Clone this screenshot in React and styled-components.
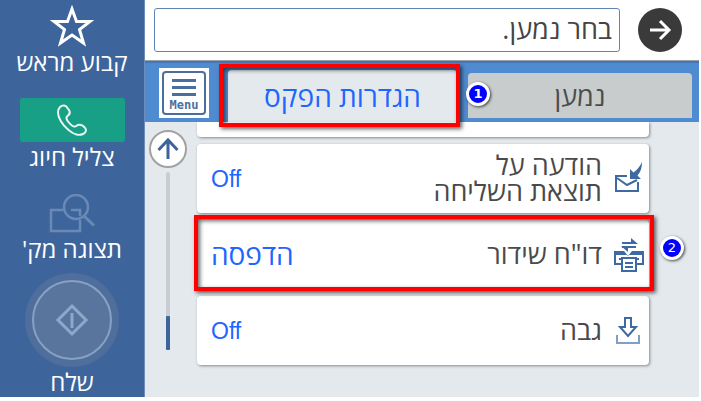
import { useState } from "react";
import styled, { createGlobalStyle } from "styled-components";

const GlobalStyle = createGlobalStyle`
  * {
    box-sizing: border-box;
  }
  body {
    margin: 0;
    background: #ffffff;
    font-family: "Open Sans", "Liberation Sans", sans-serif;
  }
  button {
    border: none;
    padding: 0;
    background: none;
    font-family: inherit;
    cursor: pointer;
  }
`;

const Screen = styled.div`
  display: flex;
  margin-right: 2px;
  background: #e4e9ee;
`;

const Sidebar = styled.nav`
  width: 145px;
  flex-shrink: 0;
  display: flex;
  flex-direction: column;
  background: #3d659c;
  border-right: 1px solid #6e8db8;
`;

const SideButton = styled.button`
  display: flex;
  flex-direction: column;
  align-items: center;
  padding-top: ${(props) => props.$space}px;
  color: #ffffff;
`;

const SideLabel = styled.span`
  font-size: 24px;
  line-height: 30px;
`;

const GreenBox = styled.span`
  width: 105px;
  height: 44px;
  display: flex;
  align-items: center;
  justify-content: center;
  border-radius: 3px;
  background: #17a085;
`;

const SendCircle = styled.span`
  width: 94px;
  height: 94px;
  display: flex;
  align-items: center;
  justify-content: center;
  border-radius: 50%;
  background: #4f6e9b;
`;

const SendRing = styled.span`
  width: 80px;
  height: 80px;
  display: flex;
  align-items: center;
  justify-content: center;
  border: 2px solid #87a1c4;
  border-radius: 50%;
  background: #5a759d;
`;

const Main = styled.main`
  flex: 1;
  min-width: 0;
  display: flex;
  flex-direction: column;
`;

const Header = styled.header`
  display: flex;
  align-items: center;
  gap: 18px;
  padding: 8px 17px 8px 9px;
  background: #ffffff;
  border-bottom: 1px solid #999fa6;
`;

const Recipient = styled.input`
  flex: 1;
  min-width: 0;
  height: 44px;
  padding: 0 7px 3px;
  border: 1px solid #6084b0;
  border-radius: 3px;
  outline: none;
  background: #ffffff;
  color: #444444;
  font-family: inherit;
  font-size: 27px;

  &::placeholder {
    color: #444444;
    opacity: 1;
  }
`;

const NextButton = styled.button`
  width: 44px;
  height: 44px;
  display: flex;
  align-items: center;
  justify-content: center;
  border-radius: 50%;
  background: #3a3a3a;
`;

const TabBar = styled.div`
  height: 61px;
  display: flex;
  align-items: center;
  padding: 0 7px 0 14px;
  background: #4f8bd0;
  border-top: 2px solid #4278b8;
`;

const MenuButton = styled.button`
  width: 50px;
  height: 50px;
  display: flex;
  margin-right: 19px;
  padding: 3px;
  background: #ffffff;
`;

const MenuFace = styled.span`
  flex: 1;
  height: 44px;
  display: flex;
  flex-direction: column;
  align-items: center;
  padding-top: 5px;
  border: 2px solid #4a6f9f;
  border-radius: 4px;
  color: #4a6f9f;
`;

const MenuText = styled.span`
  font-family: "DejaVu Sans Mono", monospace;
  font-size: 12px;
  font-weight: 700;
  line-height: 14px;
`;

const Tabs = styled.div`
  flex: 1;
  height: 100%;
  display: flex;
  align-items: flex-end;
  gap: 11px;
`;

const Tab = styled.button`
  position: relative;
  flex: ${(props) => (props.$active ? 46 : 45)} 1 0;
  height: ${(props) => (props.$active ? 52 : 45)}px;
  margin-bottom: ${(props) => (props.$active ? 0 : 4)}px;
  border-radius: 4px 4px 0 0;
  background: ${(props) => (props.$active ? "#e4e9ee" : "#c8cccd")};
  color: ${(props) => (props.$active ? "#1f66ff" : "#4c4c4c")};
  font-size: ${(props) => (props.$active ? 28 : 27)}px;
  line-height: 36px;
`;

const Content = styled.div`
  display: flex;
  padding: 0 50px 32px 4px;
`;

const ScrollColumn = styled.div`
  width: 38px;
  display: flex;
  flex-direction: column;
  align-items: center;
  margin-right: 10px;
  padding: 8px 0 15px;
`;

const UpButton = styled.button`
  width: 38px;
  height: 38px;
  display: flex;
  align-items: center;
  justify-content: center;
  border: 2px solid #a2a2a2;
  border-radius: 50%;
  background: #ffffff;
`;

const Track = styled.div`
  flex: 1;
  width: 4px;
  display: flex;
  align-items: flex-end;
  margin-top: 4px;
  border-radius: 2px;
  background: #c9cdd2;
`;

const Thumb = styled.div`
  width: 4px;
  height: 34px;
  border-radius: 1px;
  background: #3d659c;
`;

const List = styled.div`
  flex: 1;
  display: flex;
  flex-direction: column;
  gap: 7px;
`;

const Row = styled.button`
  position: relative;
  height: 69px;
  display: flex;
  align-items: center;
  justify-content: space-between;
  padding: 0 5px 0 14px;
  border-radius: 4px;
  background: #ffffff;
  box-shadow: 1px 1px 3px #85898f;
`;

const RowEnd = styled.div`
  height: 15px;
  border-radius: 0 0 4px 4px;
  background: #ffffff;
  box-shadow: 1px 1px 3px #85898f;
`;

const Value = styled.span`
  color: #1f66ff;
  font-family: ${(props) => (props.$latin ? '"Liberation Sans", sans-serif' : "inherit")};
  font-size: ${(props) => (props.$latin ? 23 : 28)}px;
  line-height: 26px;
  padding-bottom: ${(props) => (props.$latin ? 0 : 2)}px;
`;

const Info = styled.span`
  display: flex;
  align-items: center;
  gap: 12px;
`;

const Label = styled.span`
  padding-bottom: 2px;
  color: #4a4a4a;
  font-size: 27px;
  line-height: 26px;
  text-align: right;
  white-space: pre-line;
`;

const Highlight = styled.span`
  position: absolute;
  inset: ${(props) => props.$inset};
  border: 4px solid #ff0000;
  box-shadow: 2px 2px 4px rgba(0, 0, 0, 0.6), inset 2px 2px 4px rgba(0, 0, 0, 0.6);
  pointer-events: none;
  z-index: 1;
`;

const Badge = styled.span`
  position: absolute;
  top: 50%;
  right: ${(props) => props.$right}px;
  width: 24px;
  height: 24px;
  margin-top: ${(props) => props.$lift}px;
  border: 3px solid #ffffff;
  border-radius: 50%;
  background: #0000ff;
  box-shadow: 1px 1px 3px rgba(0, 0, 0, 0.7);
  color: #ffffff;
  font-family: "DejaVu Sans", sans-serif;
  font-size: 13px;
  font-weight: ${(props) => props.$weight};
  line-height: 18px;
  text-align: center;
  z-index: 2;
`;

const StarIcon = () => (
  <svg width="44" height="42" viewBox="0 0 44 42" fill="none" stroke="#fff" strokeWidth="3">
    <path d="M22 4 L26.500 16.500 H40 L29.500 24.500 L33.500 38 L22 30 L10.500 38 L14.500 24.500 L4 16.500 H17.500 Z" />
  </svg>
);

const PhoneIcon = () => (
  <svg width="32" height="34" viewBox="0 0 32 34" fill="none" stroke="#e8f6f3" strokeWidth="2">
    <path d="M4 4 C6.500 1.500 10 2 11.500 5 L13.500 8 C14.500 10.500 13 12 11.500 13 C9.500 14.500 10.500 16.500 12 18.500 C14 21 16 23 18 23.500 C20 24 20.500 22.500 22 22 C25 21 28 23.500 29.500 25.500 C31 28 29 30 27 31 C23 33 17 31 12 26.500 C6 21.500 2 14.500 2 9.500 C2 7 2.500 5.500 4 4 Z" />
  </svg>
);

const PreviewIcon = () => (
  <svg width="48" height="40" viewBox="0 0 48 40" fill="none" stroke="#6a89b5" strokeWidth="2.5">
    <path d="M15 16 H3 V37 H32 V26 M23 16 H32 V22" />
    <circle cx="28" cy="13" r="12" />
    <path d="M36 22 L46 31.500" strokeWidth="3" />
  </svg>
);

const StartIcon = () => (
  <svg width="34" height="34" viewBox="0 0 34 34" fill="none" stroke="#8fa8c9" strokeWidth="3">
    <path d="M17 3 L31 17 L17 31 L3 17 Z" />
    <path d="M17 10 V25" />
  </svg>
);

const NextIcon = () => (
  <svg width="24" height="24" viewBox="0 0 24 24" fill="none" stroke="#fff" strokeWidth="3">
    <path d="M2 12 H21 M12 3 L21 12 L12 21" />
  </svg>
);

const LinesIcon = () => (
  <svg width="24" height="20" viewBox="0 0 24 20" fill="none" stroke="#4a6f9f" strokeWidth="3">
    <path d="M0 2.500 H24 M0 9.500 H24 M0 16.500 H24" />
  </svg>
);

const UpIcon = () => (
  <svg width="24" height="24" viewBox="0 0 24 24" fill="none" stroke="#3d659c" strokeWidth="3">
    <path d="M12 22 V3 M2.500 13 L12 3 L21.500 13" />
  </svg>
);

const MailIcon = () => (
  <svg width="30" height="34" viewBox="0 0 30 34" fill="none" stroke="#3d6aa3" strokeWidth="2">
    <path d="M13 14 H2 V29 H24 V20" />
    <path d="M3 16 L13 23 L23 18" />
    <path d="M16 7 L16 17 H27 L23.500 13.500 C26.500 10 28 6 28 0 C26 4 23.500 7.500 19.500 10.500 Z" fill="#3d6aa3" stroke="none" />
  </svg>
);

const PrinterIcon = () => (
  <svg width="30" height="34" viewBox="0 0 30 34" fill="none" stroke="#3d6aa3" strokeWidth="2">
    <path d="M8 5 H22 M8 9 H22" />
    <path d="M17 0 L24 6 H17 Z M7 8 H14 V14 Z" fill="#3d6aa3" stroke="none" />
    <path d="M0 13 H10 L14 18 L18 13 H30 V17 H0 Z" fill="#3d6aa3" stroke="none" />
    <path d="M8 26 H1 V14 M22 26 H29 V14" />
    <path d="M5 21 H25" />
    <path d="M8 20 H22 V33 H8 Z" fill="#fff" />
    <path d="M11 25 H19 M11 29 H19" />
  </svg>
);

const BackupIcon = () => (
  <svg width="30" height="34" viewBox="0 0 30 34" fill="none" stroke="#3d6aa3" strokeWidth="2">
    <path d="M11 4 H17 V13 H22 L14 22 L6 13 H11 Z" />
    <path d="M3 21 V29 H25 V21" stroke="#7f9fc8" />
  </svg>
);

const rows = [
  { id: "notify", label: "הודעה על\nתוצאת השליחה", value: "Off", latin: true, icon: <MailIcon /> },
  { id: "report", label: 'דו"ח שידור', value: "הדפסה", marked: true, icon: <PrinterIcon /> },
  { id: "backup", label: "גבה", value: "Off", latin: true, icon: <BackupIcon /> },
];

const App = () => {
  const [tab, setTab] = useState("settings");
  const [recipient, setRecipient] = useState("");

  return (
    <>
      <GlobalStyle />
      <Screen>
        <Sidebar>
          <SideButton $space={5}>
            <StarIcon />
            <SideLabel dir="rtl">קבוע מראש</SideLabel>
          </SideButton>
          <SideButton $space={21}>
            <GreenBox>
              <PhoneIcon />
            </GreenBox>
            <SideLabel dir="rtl">צליל חיוג</SideLabel>
          </SideButton>
          <SideButton $space={22}>
            <PreviewIcon />
            <SideLabel dir="rtl">תצוגה מק'</SideLabel>
          </SideButton>
          <SideButton $space={9}>
            <SendCircle>
              <SendRing>
                <StartIcon />
              </SendRing>
            </SendCircle>
            <SideLabel dir="rtl">שלח</SideLabel>
          </SideButton>
        </Sidebar>
        <Main>
          <Header>
            <Recipient
              dir="rtl"
              aria-label="נמען"
              placeholder="בחר נמען."
              value={recipient}
              onChange={(e) => setRecipient(e.target.value)}
            />
            <NextButton aria-label="הבא">
              <NextIcon />
            </NextButton>
          </Header>
          <TabBar>
            <MenuButton>
              <MenuFace>
                <LinesIcon />
                <MenuText>Menu</MenuText>
              </MenuFace>
            </MenuButton>
            <Tabs>
              <Tab $active={tab === "settings"} onClick={() => setTab("settings")}>
                הגדרות הפקס
                <Highlight $inset="-6px -3px -5px -9px" />
                <Badge $right={-33} $lift={-14} $weight={700}>1</Badge>
              </Tab>
              <Tab $active={tab === "recipient"} onClick={() => setTab("recipient")}>
                נמען
              </Tab>
            </Tabs>
          </TabBar>
          <Content>
            <ScrollColumn>
              <UpButton aria-label="למעלה">
                <UpIcon />
              </UpButton>
              <Track>
                <Thumb />
              </Track>
            </ScrollColumn>
            <List>
              <RowEnd />
              {rows.map((row) => (
                <Row key={row.id}>
                  <Value $latin={row.latin}>{row.value}</Value>
                  <Info>
                    <Label dir="rtl">{row.label}</Label>
                    {row.icon}
                  </Info>
                  {row.marked && (
                    <>
                      <Highlight $inset="-5px -5px -2px -3px" />
                      <Badge $right={-35} $lift={-19} $weight={400}>2</Badge>
                    </>
                  )}
                </Row>
              ))}
            </List>
          </Content>
        </Main>
      </Screen>
    </>
  );
};

export default App;
